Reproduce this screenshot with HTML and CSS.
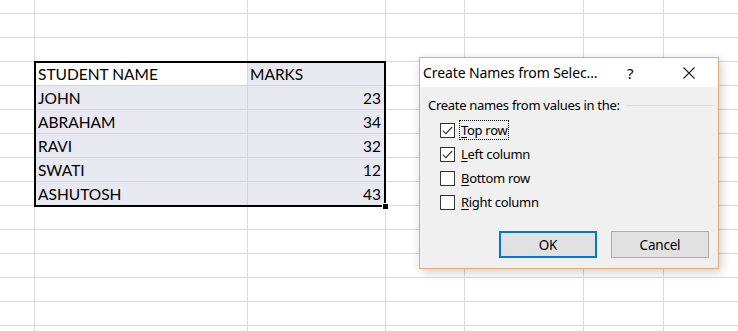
FILE: index.html
```html
<!DOCTYPE html>
<html>
  <head>
    <meta charset="UTF-8">
    <title>Create Names from Selection</title>
    <link rel="stylesheet" href="styles.css">
  </head>
  <body>
    <div class="sheet">
      <div class="sel">
        <div class="cell active">STUDENT NAME</div>
        <div class="cell">MARKS</div>
        <div class="cell">JOHN</div>
        <div class="cell num">23</div>
        <div class="cell">ABRAHAM</div>
        <div class="cell num">34</div>
        <div class="cell">RAVI</div>
        <div class="cell num">32</div>
        <div class="cell">SWATI</div>
        <div class="cell num">12</div>
        <div class="cell last">ASHUTOSH</div>
        <div class="cell num last">43</div>
        <span class="handle"></span>
      </div>

      <div class="dialog">
        <div class="titlebar">
          <span class="title">Create Names from Selec...</span>
          <span class="help">?</span>
          <svg class="close" width="12" height="12" viewBox="0 0 12 12">
            <path d="M0.5 0.5 L11.5 11.5 M11.5 0.5 L0.5 11.5" stroke="#222" stroke-width="1.1" fill="none"/>
          </svg>
        </div>
        <div class="body">
          <div class="group">
            <span>Create names from values in the:</span>
            <span class="rule"></span>
          </div>
          <div class="checks">
            <label class="check">
              <span class="box"><svg width="11" height="9" viewBox="0 0 11 9"><path d="M0.8 4.6 L3.8 7.6 L10.2 1" stroke="#333" stroke-width="1.1" fill="none"/></svg></span>
              <span class="text focus"><u>T</u>op row</span>
            </label>
            <label class="check">
              <span class="box"><svg width="11" height="9" viewBox="0 0 11 9"><path d="M0.8 4.6 L3.8 7.6 L10.2 1" stroke="#333" stroke-width="1.1" fill="none"/></svg></span>
              <span class="text"><u>L</u>eft column</span>
            </label>
            <label class="check">
              <span class="box"></span>
              <span class="text"><u>B</u>ottom row</span>
            </label>
            <label class="check">
              <span class="box"></span>
              <span class="text"><u>R</u>ight column</span>
            </label>
          </div>
          <div class="buttons">
            <button class="btn default">OK</button>
            <button class="btn">Cancel</button>
          </div>
        </div>
      </div>
    </div>
  </body>
</html>
```

FILE: styles.css
```css
body {
  margin: 0;
  background: #fff;
}

.sheet {
  position: relative;
  width: 738px;
  height: 331px;
  overflow: hidden;
  display: grid;
  grid-template-columns: 35px 213px 138px 79px 119px 80px 1fr;
  grid-template-rows: 14px repeat(14, 24px);
  font-family: Lato, "Liberation Sans", sans-serif;
  font-size: 15.5px;
  color: #000;
  background-color: #fff;
  background-image:
    linear-gradient(#d9dadb, #d9dadb),
    linear-gradient(#d9dadb, #d9dadb),
    linear-gradient(#d9dadb, #d9dadb),
    linear-gradient(#d9dadb, #d9dadb),
    linear-gradient(#d9dadb, #d9dadb),
    linear-gradient(#d9dadb, #d9dadb),
    linear-gradient(to bottom, #d9dadb 1px, transparent 1px);
  background-position: 34px 0, 247px 0, 385px 0, 464px 0, 583px 0, 663px 0, 0 13px;
  background-size: 1px 100%, 1px 100%, 1px 100%, 1px 100%, 1px 100%, 1px 100%, 100% 24px;
  background-repeat: no-repeat, no-repeat, no-repeat, no-repeat, no-repeat, no-repeat, repeat-y;
}

/* selected range */
.sel {
  position: relative;
  grid-column: 2 / 4;
  grid-row: 4 / 10;
  margin: -1px 0 -1px -1px;
  border: 2px solid #000;
  display: grid;
  grid-template-columns: 212px 1fr;
  grid-template-rows: 23px repeat(4, 24px) 1fr;
  background: #e7e8f0;
}

.cell {
  display: flex;
  align-items: flex-end;
  padding: 0 3px 1px 2px;
  line-height: 19px;
  border-bottom: 1px solid #d3d4dc;
  white-space: nowrap;
}

.cell:nth-child(odd) {
  border-right: 1px solid #d3d4dc;
}

.cell.num {
  justify-content: flex-end;
}

.cell.last {
  border-bottom: 0;
}

.cell.active {
  background: #fff;
}

.handle {
  position: absolute;
  right: -5px;
  bottom: -5px;
  width: 5px;
  height: 5px;
  background: #000;
  border: 1px solid #fff;
}

/* dialog */
.dialog {
  position: absolute;
  left: 419px;
  top: 57px;
  width: 300px;
  height: 212px;
  box-sizing: border-box;
  border: 1px solid #e6a978;
  background: #f0f0f0;
  box-shadow: 2px 3px 10px rgba(0, 0, 0, 0.2);
  font-family: "Noto Sans", "Open Sans", sans-serif;
  font-size: 13px;
  letter-spacing: -0.3px;
  color: #000;
  display: flex;
  flex-direction: column;
}

.titlebar {
  height: 29px;
  background: #fff;
  display: flex;
  align-items: center;
  padding-left: 3px;
}

.title {
  flex: 1;
  font-size: 14px;
  letter-spacing: -0.1px;
}

.help {
  width: 16px;
  font-size: 15px;
  margin-right: 40px;
}

.close {
  margin-right: 23px;
}

.body {
  flex: 1;
  padding: 8px 5px 0 8px;
  display: flex;
  flex-direction: column;
}

.group {
  display: flex;
  align-items: center;
  gap: 6px;
  height: 20px;
}

.rule {
  flex: 1;
  height: 1px;
  background: #dcdcdc;
}

.checks {
  display: flex;
  flex-direction: column;
  padding: 3px 0 0 12px;
}

.check {
  display: flex;
  align-items: center;
  gap: 4px;
  height: 24px;
}

.box {
  width: 13px;
  height: 13px;
  border: 1px solid #333;
  background: #fff;
  display: flex;
  align-items: center;
  justify-content: center;
}

.text {
  padding: 0 1px;
  border: 1px solid transparent;
}

.text.focus {
  border: 1px dotted #000;
}

.text u {
  text-decoration-thickness: 1px;
  text-underline-offset: 2px;
}

.buttons {
  display: flex;
  justify-content: flex-end;
  gap: 14px;
  margin-top: 17px;
  padding-right: 4px;
}

.btn {
  width: 98px;
  height: 27px;
  box-sizing: border-box;
  background: #e1e1e1;
  border: 1px solid #adadad;
  font-family: inherit;
  font-size: 13.5px;
  letter-spacing: -0.2px;
  color: #000;
  padding: 0;
}

.btn.default {
  border: 2px solid #0078d7;
}
```
